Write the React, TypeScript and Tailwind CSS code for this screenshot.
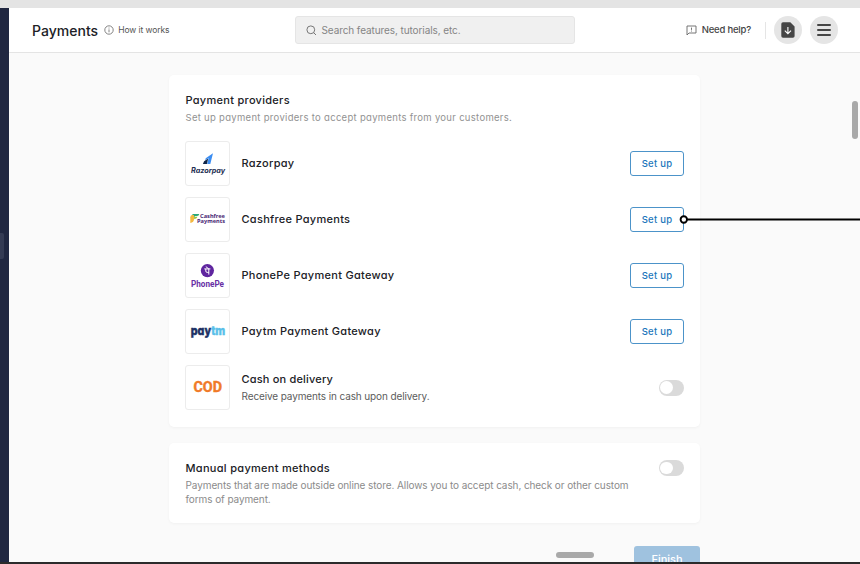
import type { ReactNode } from "react";

const geo = "[font-feature-settings:'cv11'] font-medium text-[11px] leading-[14px] text-[#202126] whitespace-nowrap";

function LogoBox({ children }: { children: ReactNode }) {
  return (
    <div className="h-[45px] w-[45px] shrink-0 overflow-hidden rounded-[3px] border border-[#ececec] bg-white">
      <svg width="43" height="43" viewBox="0 0 43 43">{children}</svg>
    </div>
  );
}

function RazorpayLogo() {
  return (
    <LogoBox>
      <path d="M27 11.2 L24.3 22 H21.2 L22.6 16 L19.2 18.2 L19.7 16.2 Z" fill="#3b8df2" />
      <path d="M22.2 16.6 L20.9 22 H16.9 L18.1 19.2 Z" fill="#102649" />
      <text x="5" y="30.8" textLength="34" lengthAdjust="spacingAndGlyphs" fontSize="7" fontWeight="700" fontStyle="italic" fill="#1b2d50" fontFamily="Inter, sans-serif" className="[font-feature-settings:'cv11']">Razorpay</text>
    </LogoBox>
  );
}

function CashfreeLogo() {
  return (
    <LogoBox>
      <path d="M6.5 16 H13.3 Q13 18 11 18 H9.2 Q8.5 18 8.5 19 V20 H6 Z" fill="#29a879" />
      <path d="M4.3 19.2 Q4.3 17 6.5 17 H8 V21 Q8 24.5 4.3 25 Z" fill="#f4b840" />
      <path d="M8.2 18.8 H11.5 Q11.2 20.8 8.2 21.2 Z" fill="#9bc53b" />
      <text x="14" y="20.3" textLength="25" lengthAdjust="spacingAndGlyphs" fontSize="5.6" fontWeight="700" fill="#4a2875" fontFamily="Noto Sans, sans-serif">Cashfree</text>
      <text x="11" y="25.3" textLength="28" lengthAdjust="spacingAndGlyphs" fontSize="5.6" fontWeight="700" fill="#4a2875" fontFamily="Noto Sans, sans-serif">Payments</text>
    </LogoBox>
  );
}

function PhonePeLogo() {
  return (
    <LogoBox>
      <circle cx="21.4" cy="16.6" r="6.6" fill="#5f259f" />
      <path d="M18.3 14.9 H24.4 M19.8 12.6 L22.8 14.9 V20.6 M19.8 15 V17 Q19.8 18.4 21.2 18.4 H22.8" fill="none" stroke="white" strokeWidth="1" />
      <text x="5" y="32.6" textLength="33" lengthAdjust="spacingAndGlyphs" fontSize="8.8" fontWeight="700" fill="#6830a5" fontFamily="Roboto, sans-serif">PhonePe</text>
    </LogoBox>
  );
}

function PaytmLogo() {
  return (
    <LogoBox>
      <g fontSize="12.5" fontWeight="800" fontFamily="Inter, sans-serif" strokeWidth="0.5" className="[font-feature-settings:'cv11']">
        <text x="4.8" y="25.2" textLength="34.4" lengthAdjust="spacingAndGlyphs" fill="#1c3164" stroke="#1c3164">
          pay<tspan fill="#59bfe9" stroke="#59bfe9">tm</tspan>
        </text>
      </g>
    </LogoBox>
  );
}

function CodLogo() {
  return (
    <LogoBox>
      <text x="7.4" y="25.7" textLength="28.6" lengthAdjust="spacingAndGlyphs" fontSize="14" fontWeight="700" fill="#f07a28" stroke="#f07a28" strokeWidth="0.4" fontFamily="Roboto, sans-serif">COD</text>
    </LogoBox>
  );
}

function Toggle() {
  return (
    <div className="flex h-[16px] w-[25.5px] shrink-0 items-center rounded-full bg-[#dadada] pl-[1.5px]">
      <div className="h-[12.5px] w-[12.5px] rounded-full bg-white" />
    </div>
  );
}

function SetUp({ linked }: { linked?: boolean }) {
  return (
    <div className="relative h-[25px] w-[54px]">
      <button className="block h-[25px] w-[54px] rounded-[3px] border border-[#4c93c9] text-[9.5px] leading-[23px] font-medium tracking-[0.25px] text-[#1b76bb] [font-feature-settings:'cv11']">Set up</button>
      {linked && (
        <svg className="absolute top-[8px] left-[49px]" width="182" height="9" viewBox="0 0 182 9">
          <path d="M7 4.5 H182" stroke="black" strokeWidth="2" />
          <circle cx="4.8" cy="4.5" r="3.2" fill="white" stroke="black" strokeWidth="1.9" />
        </svg>
      )}
    </div>
  );
}

const providers = [
  { name: "Razorpay", logo: <RazorpayLogo /> },
  { name: "Cashfree Payments", logo: <CashfreeLogo />, linked: true },
  { name: "PhonePe Payment Gateway", logo: <PhonePeLogo /> },
  { name: "Paytm Payment Gateway", logo: <PaytmLogo /> },
];

function Header() {
  return (
    <header className="flex h-[45px] shrink-0 items-center border-b border-[#e4e4e4] bg-white pr-[22px] pl-[23px]">
      <div className="flex w-[263px] items-center">
        <h1 className="text-[14px] font-medium tracking-[0.02px] text-[#202126]">Payments</h1>
        <svg className="ml-[6px]" width="10" height="10" viewBox="0 0 10 10" fill="none" stroke="#666" strokeWidth="0.8">
          <circle cx="5" cy="5" r="4.2" />
          <path d="M5 4.4 V7.3 M5 2.6 V3.5" />
        </svg>
        <span className="ml-[4px] text-[8.5px] tracking-[-0.08px] text-[#555]">How it works</span>
      </div>
      <div className="flex h-[28px] w-[280px] items-center rounded-[3px] border border-[#e5e5e5] bg-[#f0f0f0] pl-[10px]">
        <svg width="11" height="11" viewBox="0 0 11 11" fill="none" stroke="#777" strokeWidth="1">
          <circle cx="4.8" cy="4.8" r="3.9" />
          <path d="M7.6 7.6 L10 10" />
        </svg>
        <span className="ml-[4.5px] text-[10px] tracking-[-0.09px] text-[#858585]">Search features, tutorials, etc.</span>
      </div>
      <div className="ml-auto flex items-center">
        <svg width="11" height="11" viewBox="0 0 11 11" fill="none" stroke="#666" strokeWidth="0.9">
          <path d="M1 10 V1 H10 V8 H3 Z M5.5 2.6 V4.9 M5.5 5.6 V6.5" />
        </svg>
        <span className="ml-[5px] text-[9.5px] font-medium tracking-[-0.2px] text-[#444]">Need help?</span>
        <div className="ml-[14px] h-[17px] w-px bg-[#e5e5e5]" />
        <div className="ml-[8px] flex h-[28px] w-[28px] items-center justify-center rounded-full bg-[#e5e5e5]">
          <svg width="14" height="16" viewBox="0 0 14 16">
            <path d="M2 0.3 H9.3 L13.6 4.5 V14 Q13.6 15.8 11.8 15.8 H2 Q0.3 15.8 0.3 14 V2 Q0.3 0.3 2 0.3 Z" fill="#454545" />
            <path d="M6.9 5 V11.5 M3.8 8.7 L6.9 11.7 L10 8.7" fill="none" stroke="white" strokeWidth="1.1" />
          </svg>
        </div>
        <div className="ml-[8px] flex h-[28px] w-[28px] flex-col items-center justify-center gap-[3px] rounded-full bg-[#e5e5e5]">
          <div className="h-[2px] w-[14px] rounded-full bg-[#454545]" />
          <div className="h-[2px] w-[14px] rounded-full bg-[#454545]" />
          <div className="h-[2px] w-[14px] rounded-full bg-[#454545]" />
        </div>
      </div>
    </header>
  );
}

export default function App() {
  return (
    <div className="relative flex h-[564px] w-[860px] flex-col overflow-hidden bg-[#fafafa] font-['Inter',sans-serif]">
      <div className="h-[8px] shrink-0 bg-[#e4e4e4]" />
      <div className="flex h-[554px] shrink-0 overflow-hidden">
        <aside className="w-[9px] shrink-0 bg-[#202741] pt-[225px]">
          <div className="h-[26px] w-[4px] rounded-r-[2px] bg-[#343b54]" />
        </aside>
        <div className="flex w-[851px] shrink-0 flex-col">
          <Header />
          <main className="ml-[160px] flex w-[531px] flex-col pt-[22px]">
            <section className="h-[352px] shrink-0 rounded-[5px] bg-white px-[16px] pt-[18px] shadow-[0_1px_3px_rgba(0,0,0,0.04)]">
              <h2 className={`${geo} pl-[0.5px] tracking-[0.29px]`}>Payment providers</h2>
              <p className="mt-[5px] pl-[0.5px] text-[9.5px] leading-[12px] tracking-[0.3px] text-[#929292] [font-feature-settings:'cv11']">Set up payment providers to accept payments from your customers.</p>
              <div className="mt-[17px] flex flex-col gap-[11px]">
                {providers.map((p) => (
                  <div key={p.name} className="flex h-[45px] items-center">
                    {p.logo}
                    <span className={`mb-[2px] ml-[11.5px] flex-1 tracking-[0.28px] ${geo}`}>{p.name}</span>
                    <SetUp linked={p.linked} />
                  </div>
                ))}
                <div className="flex h-[45px] items-center">
                  <CodLogo />
                  <div className="ml-[11.5px] flex-1">
                    <div className={`${geo} tracking-[0.18px]`}>Cash on delivery</div>
                    <div className="mt-[3px] text-[10px] leading-[14px] tracking-[-0.12px] text-[#5c5c5c]">Receive payments in cash upon delivery.</div>
                  </div>
                  <Toggle />
                </div>
              </div>
            </section>
            <section className="mt-[16px] flex h-[80px] shrink-0 justify-between rounded-[5px] bg-white px-[16px] pt-[17px] shadow-[0_1px_3px_rgba(0,0,0,0.04)]">
              <div className="pl-[0.5px]">
                <h2 className={`${geo} mt-[1px] tracking-[0.3px]`}>Manual payment methods</h2>
                <p className="mt-[3px] text-[10px] leading-[14px] tracking-[-0.09px] text-[#8b8b8b]">
                  Payments that are made outside online store. Allows you to accept cash, check or other custom
                  <br />
                  forms of payment.
                </p>
              </div>
              <Toggle />
            </section>
            <button className="mt-[22.5px] h-[28px] w-[66px] shrink-0 self-end rounded-[3px] bg-[#9fc2df] text-[11px] font-medium text-white">Finish</button>
          </main>
        </div>
      </div>
      <div className="h-[2px] shrink-0 bg-[#2b2b2b]" />
      <div className="absolute top-[101px] left-[852px] h-[38px] w-[6px] rounded-full bg-[#a9a9a9]" />
      <div className="absolute top-[552px] left-[556px] h-[6px] w-[38px] rounded-full bg-[#a9a9a9]" />
    </div>
  );
}
